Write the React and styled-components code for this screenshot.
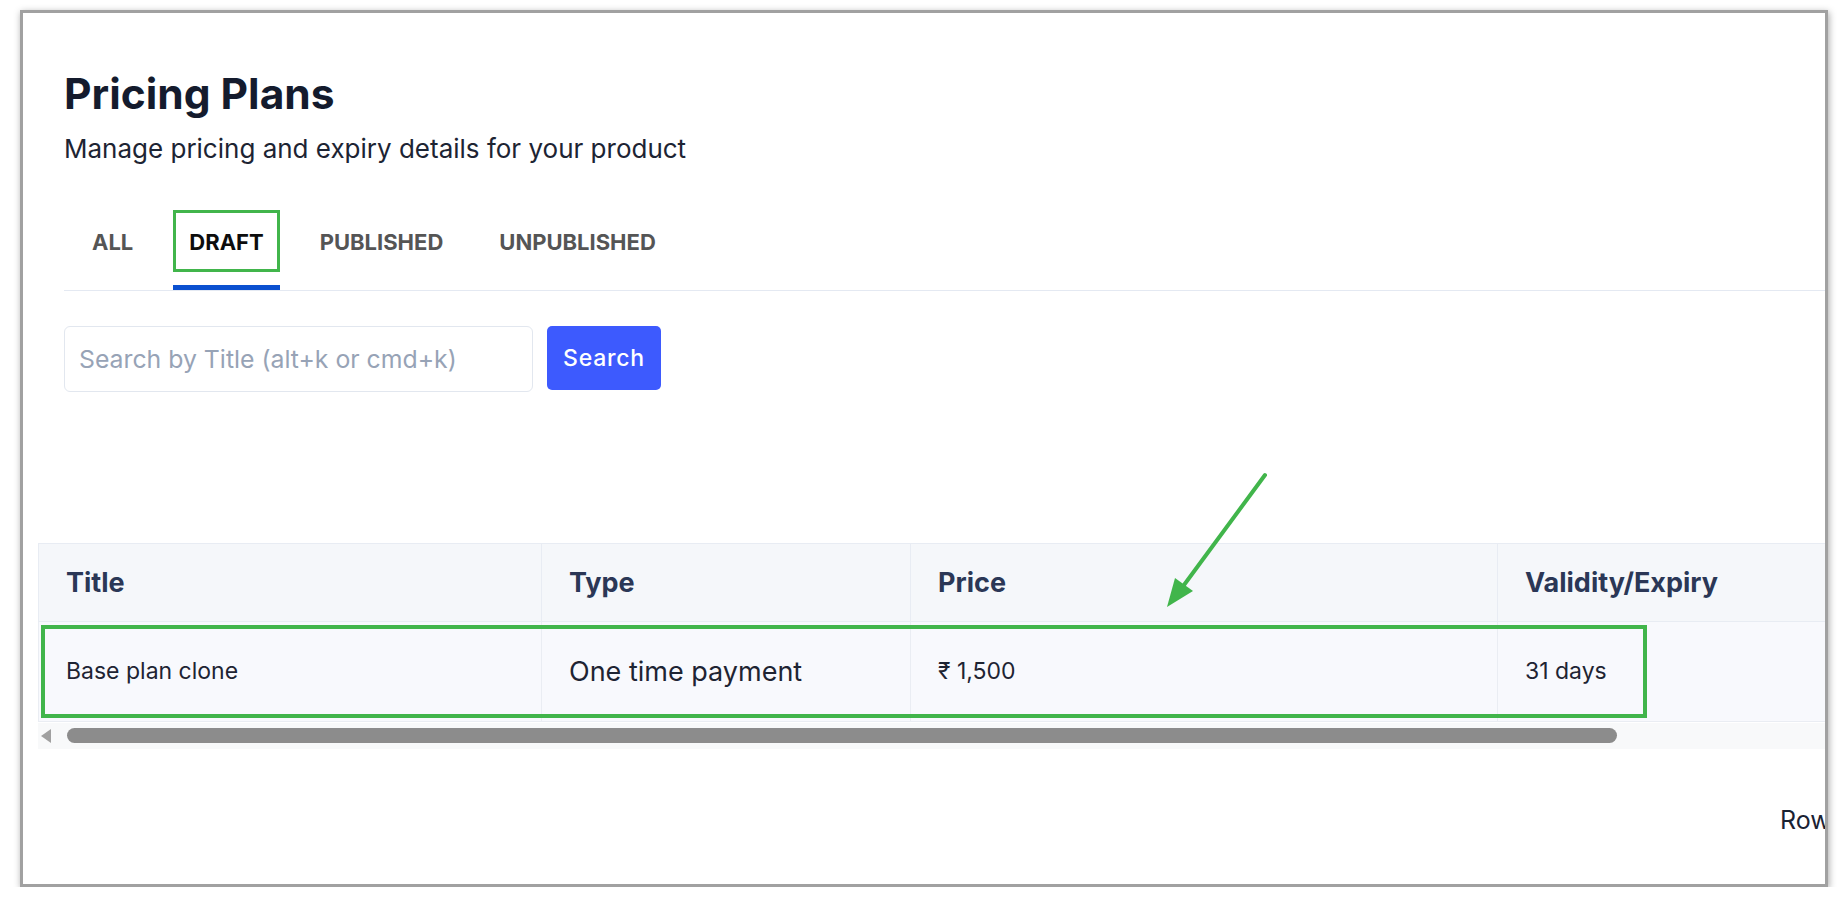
import styled, { createGlobalStyle } from 'styled-components';

const GlobalStyle = createGlobalStyle`
    body {
        margin: 0;
        background: #ffffff;
        font-family: Inter, "Noto Sans", sans-serif;
    }
`;

const Frame = styled.div`
    position: relative;
    box-sizing: border-box;
    margin: 10px 0 0 20px;
    width: 1808px;
    height: 877px;
    border: 3px solid #a1a1a1;
    box-shadow: 1px 2px 7px rgba(0, 0, 0, 0.35);
    background: #ffffff;
    overflow: hidden;
`;

const Header = styled.div`
    padding: 55px 0 0 41px;
`;

const Title = styled.h1`
    margin: 0;
    font-size: 42.5px;
    line-height: 1.2;
    font-weight: 700;
    color: #141b2d;
`;

const Subtitle = styled.p`
    margin: 14px 0 0;
    font-size: 26px;
    line-height: 1.2;
    color: #1d2433;
`;

const TabBar = styled.div`
    display: flex;
    margin-top: 46px;
    border-bottom: 1px solid #e4e9f2;
`;

const Tab = styled.div`
    position: relative;
    margin: 0 12px;
    padding: 19px 16px 34px;
    font-size: 22px;
    line-height: 1.2;
    font-weight: 700;
    text-transform: uppercase;
    color: ${p => (p.$active ? '#0d0d0d' : '#555555')};
    &::after {
        content: '';
        position: absolute;
        left: 0;
        right: 0;
        bottom: 0;
        height: 5px;
        background: ${p => (p.$active ? '#0b50d0' : 'transparent')};
    }
`;

const TabMark = styled.div`
    position: absolute;
    top: 0;
    left: 0;
    right: 0;
    height: 62px;
    box-sizing: border-box;
    border: 3px solid #41b54b;
`;

const SearchRow = styled.div`
    display: flex;
    gap: 14px;
    margin-top: 35px;
`;

const SearchInput = styled.input`
    box-sizing: border-box;
    width: 469px;
    height: 66px;
    padding: 0 14px;
    border: 1px solid #e2e7ef;
    border-radius: 6px;
    font-family: Inter, sans-serif;
    font-size: 24.8px;
    color: #1d2433;
    outline: none;
    &::placeholder {
        color: #97a3b6;
    }
`;

const SearchButton = styled.button`
    width: 114px;
    height: 64px;
    padding: 0;
    border: none;
    border-radius: 5px;
    background: #3d5afe;
    color: #ffffff;
    font-family: Inter, sans-serif;
    font-size: 23px;
    font-weight: 500;
    letter-spacing: 0.8px;
`;

const TableArea = styled.div`
    position: relative;
    margin: 151px 0 0 15px;
    width: 1900px;
`;

const Table = styled.table`
    border-collapse: collapse;
    table-layout: fixed;
    width: 1900px;
    border: 1px solid #e8ecf3;
`;

const Th = styled.th`
    box-sizing: border-box;
    width: ${p => p.$w}px;
    height: 78px;
    padding: 0 27px;
    text-align: left;
    vertical-align: middle;
    background: #f5f7fa;
    border: 1px solid #e8ecf3;
    font-size: 27px;
    font-weight: 700;
    color: #2b3756;
    white-space: nowrap;
`;

const Td = styled.td`
    height: 99px;
    padding: 0 27px;
    vertical-align: middle;
    background: #f8f9fd;
    border: 1px solid #eaedf3;
    font-size: ${p => p.$size || 23}px;
    color: #1e2433;
    white-space: nowrap;
`;

const RowMark = styled.div`
    position: absolute;
    left: 3px;
    top: 82px;
    width: 1606px;
    height: 93px;
    box-sizing: border-box;
    border: 4px solid #41b54b;
`;

const ScrollBar = styled.div`
    display: flex;
    align-items: center;
    height: 26px;
    margin-top: 1px;
    padding-left: 3px;
    background: #f8f9fa;
`;

const ScrollArrow = styled.div`
    width: 0;
    height: 0;
    border-top: 7px solid transparent;
    border-bottom: 7px solid transparent;
    border-right: 10px solid #a0a0a0;
`;

const ScrollThumb = styled.div`
    margin-left: 16px;
    width: 1550px;
    height: 15px;
    border-radius: 8px;
    background: #8c8c8c;
`;

const Footer = styled.div`
    padding: 56px 0 0 1757px;
    font-size: 25px;
    line-height: 1.2;
    color: #1a2233;
    white-space: nowrap;
`;

const Arrow = styled.svg`
    position: absolute;
    left: 1107px;
    top: 455px;
`;

const tabs = ['All', 'Draft', 'Published', 'Unpublished'];

const columns = [
    { label: 'Title', w: 503 },
    { label: 'Type', w: 369 },
    { label: 'Price', w: 587 },
    { label: 'Validity/Expiry', w: 441 },
];

export default function App() {
    return (
        <>
            <GlobalStyle />
            <Frame>
                <Header>
                    <Title>Pricing Plans</Title>
                    <Subtitle>Manage pricing and expiry details for your product</Subtitle>
                    <TabBar>
                        {tabs.map(t => (
                            <Tab key={t} $active={t === 'Draft'}>
                                {t}
                                {t === 'Draft' && <TabMark />}
                            </Tab>
                        ))}
                    </TabBar>
                    <SearchRow>
                        <SearchInput placeholder="Search by Title (alt+k or cmd+k)" />
                        <SearchButton>Search</SearchButton>
                    </SearchRow>
                </Header>

                <TableArea>
                    <Table>
                        <thead>
                            <tr>
                                {columns.map(c => (
                                    <Th key={c.label} $w={c.w}>{c.label}</Th>
                                ))}
                            </tr>
                        </thead>
                        <tbody>
                            <tr>
                                <Td>Base plan clone</Td>
                                <Td $size={27}>One time payment</Td>
                                <Td>₹ 1,500</Td>
                                <Td>31 days</Td>
                            </tr>
                        </tbody>
                    </Table>
                    <RowMark />
                    <ScrollBar>
                        <ScrollArrow />
                        <ScrollThumb />
                    </ScrollBar>
                </TableArea>

                <Footer>Rows per page: 10</Footer>

                <Arrow width="150" height="160" viewBox="0 0 150 160">
                    <line x1="135" y1="7" x2="54" y2="117" stroke="#41b54b" strokeWidth="4" strokeLinecap="round" />
                    <polygon points="37,139 45,110 63,123" fill="#41b54b" />
                </Arrow>
            </Frame>
        </>
    );
}
